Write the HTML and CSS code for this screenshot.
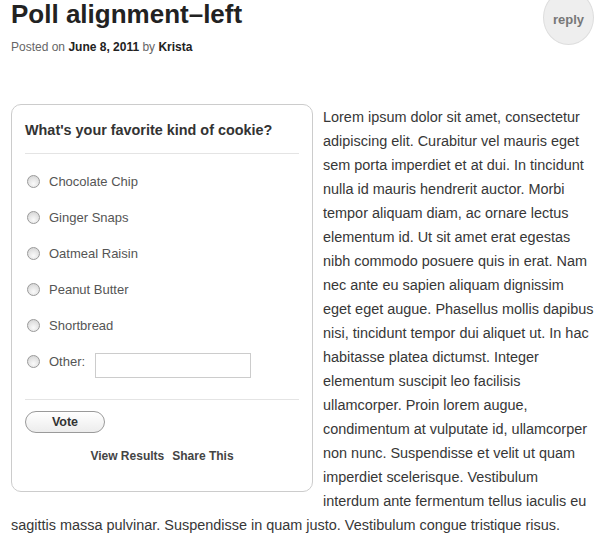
FILE: index.html
```html
<!DOCTYPE html>
<html>
<head>
<meta charset="utf-8">
<link rel="stylesheet" href="styles.css">
</head>
<body>
<div class="page">
  <header class="entry-header">
    <h1 class="entry-title">Poll alignment–left</h1>
    <div class="entry-meta"><span class="sep">Posted on </span><b>June 8, 2011</b><span class="sep"> by </span><b>Krista</b></div>
    <a class="reply">reply</a>
  </header>
  <div class="entry-content">
    <div class="poll">
      <div class="question">What's your favorite kind of cookie?</div>
      <ul class="answers">
        <li><span class="radio"></span><span class="label">Chocolate Chip</span></li>
        <li><span class="radio"></span><span class="label">Ginger Snaps</span></li>
        <li><span class="radio"></span><span class="label">Oatmeal Raisin</span></li>
        <li><span class="radio"></span><span class="label">Peanut Butter</span></li>
        <li><span class="radio"></span><span class="label">Shortbread</span></li>
        <li><span class="radio"></span><span class="label">Other:</span><span class="other"></span></li>
      </ul>
      <div class="vote-row"><span class="vote">Vote</span></div>
      <div class="links"><a>View Results</a><a>Share This</a></div>
    </div>
    <p class="text">Lorem ipsum dolor sit amet, consectetur<br>
adipiscing elit. Curabitur vel mauris eget<br>
sem porta imperdiet et at dui. In tincidunt<br>
nulla id mauris hendrerit auctor. Morbi<br>
tempor aliquam diam, ac ornare lectus<br>
elementum id. Ut sit amet erat egestas<br>
nibh commodo posuere quis in erat. Nam<br>
nec ante eu sapien aliquam dignissim<br>
eget eget augue. Phasellus mollis dapibus<br>
nisi, tincidunt tempor dui aliquet ut. In hac<br>
habitasse platea dictumst. Integer<br>
elementum suscipit leo facilisis<br>
ullamcorper. Proin lorem augue,<br>
condimentum at vulputate id, ullamcorper<br>
non nunc. Suspendisse et velit ut quam<br>
imperdiet scelerisque. Vestibulum<br>
interdum ante fermentum tellus iaculis eu<br>
sagittis massa pulvinar. Suspendisse in quam justo. Vestibulum congue tristique risus.</p>
  </div>
</div>
</body>
</html>
```
FILE: styles.css
```css
html, body {
  margin: 0;
  padding: 0;
  background: #fff;
}
body {
  font-family: "Liberation Sans", Arial, sans-serif;
  color: #373737;
  overflow: hidden;
}
.page {
  padding: 0 0 0 11px;
  width: 590px;
}
.entry-header {
  position: relative;
  height: 104px;
}
.entry-title {
  margin: 0;
  font-size: 26px;
  line-height: 28px;
  font-weight: bold;
  color: #222;
}
.entry-meta {
  margin-top: 11px;
  font-size: 12px;
  line-height: 16px;
  color: #222;
}
.entry-meta .sep {
  color: #666;
}
.reply {
  position: absolute;
  left: 532px;
  top: -10px;
  width: 49px;
  height: 49px;
  border-radius: 50%;
  background: #eee;
  border: 1px solid #ddd;
  color: #777;
  font-size: 13px;
  font-weight: bold;
  display: flex;
  align-items: center;
  justify-content: center;
  padding-top: 4px;
}
.poll {
  float: left;
  width: 274px;
  margin: 0 10px 0 0;
  padding: 0 13px;
  border: 1px solid #ccc;
  border-radius: 10px;
  height: 386px;
}
.question {
  font-size: 14.4px;
  font-weight: bold;
  color: #333;
  padding: 17px 0 15px;
  line-height: 16px;
  border-bottom: 1px solid #e4e4e4;
}
.answers {
  list-style: none;
  margin: 0;
  padding: 9px 0 20px;
  border-bottom: 1px solid #e4e4e4;
}
.answers li {
  display: flex;
  align-items: center;
  height: 36px;
  font-size: 13px;
  color: #555;
}
.radio {
  flex: none;
  width: 13px;
  height: 13px;
  border-radius: 50%;
  border: 1px solid #9a9a9a;
  background: radial-gradient(circle at 50% 70%, #fafafa 0%, #e8e8e8 45%, #cfcfcf 100%);
  margin: 0 9px 0 2px;
  box-sizing: border-box;
}
.other {
  display: inline-block;
  width: 154px;
  height: 23px;
  border: 1px solid #ccc;
  margin-left: 10px;
  margin-top: 9px;
}
.vote-row {
  padding-top: 11px;
  line-height: 0;
}
.vote {
  display: inline-flex;
  align-items: center;
  justify-content: center;
  width: 78px;
  height: 20px;
  line-height: 20px;
  border: 1px solid #9a9a9a;
  border-radius: 11px;
  background: linear-gradient(#fff, #ececec);
  font-size: 12.5px;
  font-weight: bold;
  color: #333;
}
.links {
  text-align: center;
  font-size: 12px;
  font-weight: bold;
  color: #444;
  padding-top: 16px;
  line-height: 14px;
}
.links a {
  margin: 0 4px;
}
.text {
  margin: 0;
  padding-top: 1px;
  font-size: 14.45px;
  line-height: 24px;
  color: #373737;
}
```
